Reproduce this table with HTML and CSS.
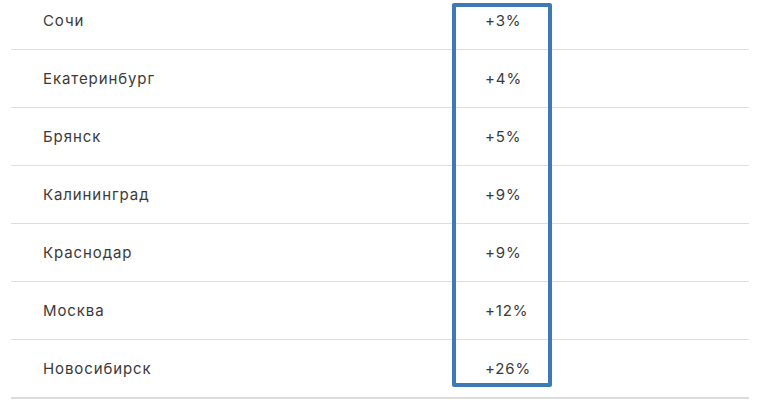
FILE: index.html
```html
<!DOCTYPE html>
<html lang="ru">
<head>
<meta charset="utf-8">
<link rel="stylesheet" href="styles.css">
</head>
<body>
<div class="wrap">
  <div class="table">
    <div class="row"><div class="city">Сочи</div><div class="val">+3%</div></div>
    <div class="row"><div class="city">Екатеринбург</div><div class="val">+4%</div></div>
    <div class="row"><div class="city">Брянск</div><div class="val">+5%</div></div>
    <div class="row"><div class="city">Калининград</div><div class="val">+9%</div></div>
    <div class="row"><div class="city">Краснодар</div><div class="val">+9%</div></div>
    <div class="row"><div class="city">Москва</div><div class="val">+12%</div></div>
    <div class="row last"><div class="city">Новосибирск</div><div class="val">+26%</div></div>
  </div>
  <div class="highlight"></div>
</div>
</body>
</html>
```

FILE: styles.css
```css
html, body {
  margin: 0;
  padding: 0;
  background: #ffffff;
}
body {
  font-family: Inter, "Noto Sans", sans-serif;
  font-size: 15px;
  letter-spacing: 0.9px;
  color: #3a3a3a;
  overflow: hidden;
}
.wrap {
  position: relative;
  display: flow-root;
  width: 783px;
  height: 416px;
}
.table {
  width: 738px;
  margin: -8px 0 0 11px;
}
.row {
  display: grid;
  grid-template-columns: 474px 1fr;
  align-items: center;
  height: 57px;
  border-bottom: 1px solid #dddddd;
}
.row.last {
  border-bottom: 2px solid #dcdcdc;
}
.city {
  padding-left: 32px;
}
.val {
  padding-left: 0;
}
.highlight {
  position: absolute;
  left: 452px;
  top: 3px;
  width: 92px;
  height: 376px;
  border: 4px solid #3d79b6;
  border-radius: 2px;
}
```
